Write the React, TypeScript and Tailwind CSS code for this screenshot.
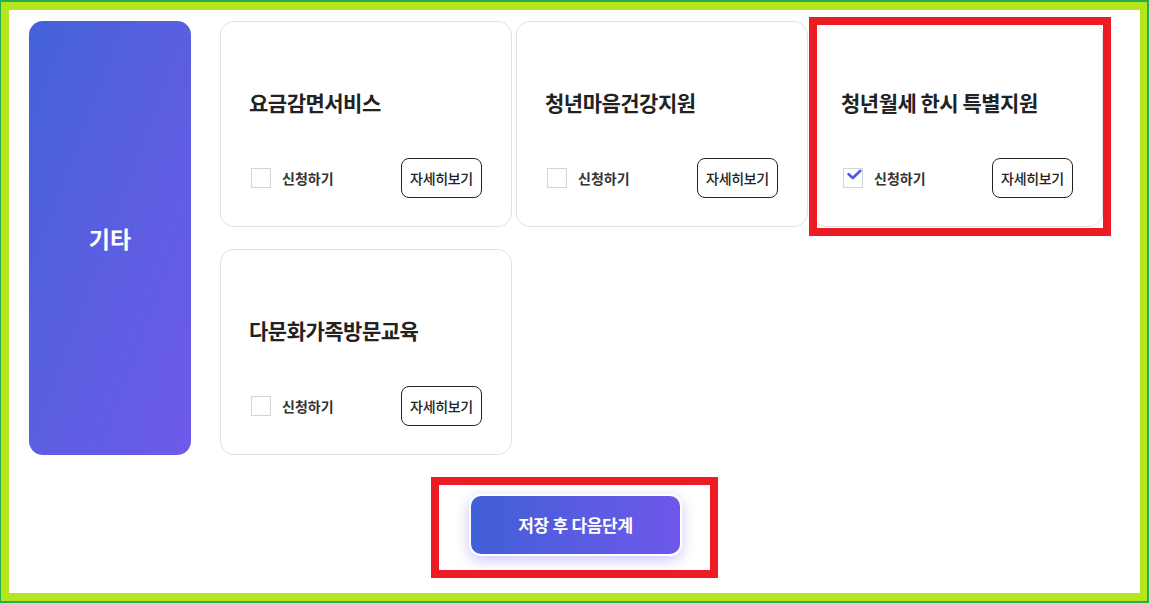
const cards = [
  { title: "요금감면서비스", checked: false, marked: false },
  { title: "청년마음건강지원", checked: false, marked: false },
  { title: "청년월세 한시 특별지원", checked: true, marked: true },
  { title: "다문화가족방문교육", checked: false, marked: false },
];

const Card = ({ title, checked }: { title: string; checked: boolean }) => (
  <div className="h-[206px] rounded-[14px] border border-[#e2e2e2] bg-white px-[28px] pt-[66px] pb-[28px] pr-[29px]">
    <h3 className="text-[21px] leading-[28px] font-bold text-[#222] tracking-[-0.5px]">{title}</h3>
    <div className="mt-[42px] flex h-[40px] items-center justify-between">
      <label className="flex items-center gap-[11px] pl-[2px]">
        <span className="flex h-[20px] w-[20px] items-center justify-center border border-[#d4d4dc] bg-white">
          {checked && (
            <svg width="18" height="14" viewBox="0 0 18 14" className="-mt-[6px] ml-[3px]">
              <path d="M2 6 L7 10.5 L16 2" fill="none" stroke="#4b5bd9" strokeWidth="3.2" strokeLinecap="round" strokeLinejoin="round" />
            </svg>
          )}
        </span>
        <span className="text-[14px] font-semibold text-[#333]">신청하기</span>
      </label>
      <button className="h-[40px] w-[81px] rounded-[8px] border border-[#222] bg-white text-[14px] font-medium text-[#222] tracking-[-0.3px]">
        자세히보기
      </button>
    </div>
  </div>
);

export default function App() {
  return (
    <div
      className="h-[603px] w-[1149px] border-2 border-l border-[#22b14c]"
      style={{ fontFamily: '"Noto Sans CJK KR", "Noto Sans", sans-serif' }}
    >
      <div className="h-full border-[8px] border-r-[7px] border-[#b5e61d] bg-white pl-[20px] pt-[11px]">
        <div className="flex gap-[29px]">
          <div className="flex h-[434px] w-[162px] items-center justify-center rounded-[14px] bg-linear-to-br from-[#4262d8] to-[#6e5aea]">
            <span className="text-[23px] font-bold text-white">기타</span>
          </div>
          <div className="grid grid-cols-[292px_292px_291px] gap-x-[4px] gap-y-[22px]">
            {cards.map((c) =>
              c.marked ? (
                <div key={c.title} className="relative">
                  <Card title={c.title} checked={c.checked} />
                  <div className="pointer-events-none absolute -left-[3px] -top-[4px] h-[219px] w-[302px] border-[8px] border-[#ed1c24]" />
                </div>
              ) : (
                <Card key={c.title} title={c.title} checked={c.checked} />
              )
            )}
          </div>
        </div>
        <div className="mt-[39px] flex justify-center pr-[18px]">
          <div className="relative">
            <button className="h-[62px] w-[213px] rounded-[12px] border-2 border-white bg-linear-to-r from-[#3f5fd6] to-[#6d58ea] text-[17px] font-bold text-white tracking-[-0.3px] shadow-[0_4px_14px_rgba(110,90,234,0.35)]">
              저장 후 다음단계
            </button>
            <div className="pointer-events-none absolute -left-[38px] -top-[17px] h-[101px] w-[287px] border-[8px] border-[#ed1c24]" />
          </div>
        </div>
      </div>
    </div>
  );
}
